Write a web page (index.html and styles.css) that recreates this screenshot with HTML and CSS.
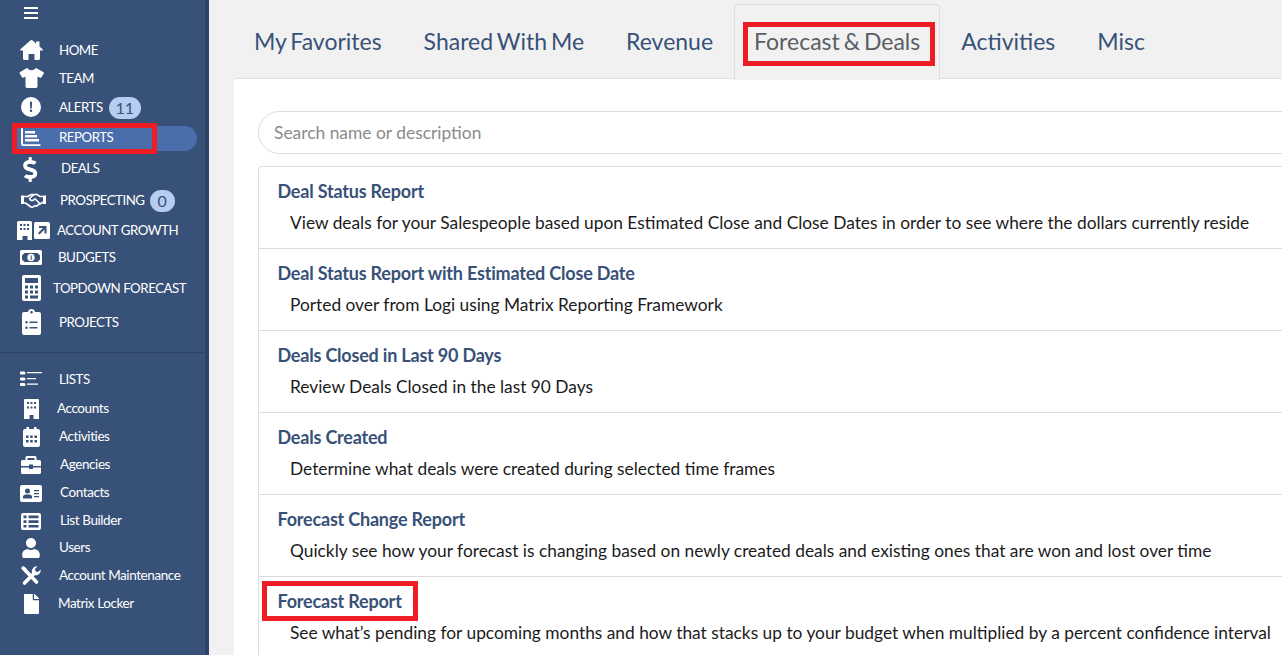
FILE: index.html
```html
<!DOCTYPE html>
<html lang="en">
<head>
<meta charset="utf-8">
<title>Reports</title>
<link rel="stylesheet" href="styles.css">
</head>
<body>
<div class="app">
  <aside class="sidebar">
    <div class="burger"><span></span><span></span><span></span></div>
    <nav class="nav">
      <a class="item h28"><span class="ico"><svg width="23" height="20" viewBox="0 0 23 20"><path d="M10.300.5a1.800 1.800 0 0 1 2.400 0l3.300 2.900V1.500h3.500v5l3.100 2.700c.6.500.2 1.400-.5 1.400H20V18.500a1.500 1.500 0 0 1-1.500 1.500H14.500v-6h-6v6H4.500A1.500 1.500 0 0 1 3 18.500V10.600H.900c-.7 0-1.100-.9-.5-1.400z"/></svg></span><span class="lbl">HOME</span></a>
      <a class="item h28"><span class="ico"><svg width="25" height="20" viewBox="0 0 25 20"><path d="M7.500.300c.4-.3 1-.3 1.200.100 1 2.300 6.600 2.300 7.600 0 .2-.4.800-.4 1.200-.100l6.800 3.600c.6.300.8 1 .5 1.500l-2.300 3.800c-.3.500-.9.700-1.400.5L18.500 8.600v10a1.400 1.400 0 0 1-1.400 1.400H7.900a1.400 1.400 0 0 1-1.400-1.400v-10L4.400 9.700c-.5.200-1.100 0-1.400-.5L.7 5.400C.4 4.900.6 4.200 1.200 3.900z"/></svg></span><span class="lbl">TEAM</span></a>
      <a class="item h30"><span class="ico"><svg width="20" height="20" viewBox="0 0 20 20"><path fill-rule="evenodd" d="M10 0a10 10 0 1 1 0 20 10 10 0 0 1 0-20zM8.900 4.800l.3 6.600h1.600l.3-6.600zM10 12.500a1.300 1.300 0 1 0 0 2.600 1.300 1.300 0 0 0 0-2.600z"/></svg></span><span class="lbl">ALERTS</span><span class="badge b-alerts">11</span></a>
      <a class="item h30 active"><span class="ico"><svg width="20" height="18" viewBox="0 0 20 18"><path d="M0 1a1 1 0 0 1 2 0v14.500a.8.8 0 0 0 .8.800H19a.9.9 0 0 1 0 1.700H2.500A2.500 2.500 0 0 1 0 15.500zM4 3h10v2.500H4zM4 7h12v2.500H4zM4 11h14v2.500H4z"/></svg></span><span class="lbl">REPORTS</span></a>
      <a class="item h32"><span class="ico"><svg class="nudge-1" width="16" height="25" viewBox="0 0 320 512"><path d="M209.200 233.400l-108-31.600C88.700 198.200 80 186.500 80 173.500c0-16.300 13.200-29.500 29.500-29.500h66.300c12.200 0 24.200 3.700 34.200 10.500 6.100 4.100 14.300 3.100 19.500-2l34.800-34c7.100-6.900 6.100-18.400-1.800-24.500C238 74.800 207.400 64.100 176 64V16c0-8.800-7.200-16-16-16h-32c-8.800 0-16 7.200-16 16v48h-2.500C45.800 64-5.400 118.700.5 183.600c4.200 46.100 39.400 83.600 83.800 96.600l102.500 30c12.500 3.700 21.200 15.300 21.200 28.300 0 16.300-13.200 29.500-29.500 29.500h-66.300C100 368 88 364.300 78 357.500c-6.100-4.100-14.300-3.100-19.500 2l-34.800 34c-7.100 6.900-6.100 18.400 1.800 24.500 24.500 19.200 55.100 29.900 86.500 30v48c0 8.800 7.200 16 16 16h32c8.800 0 16-7.200 16-16v-48.200c46.600-.9 90.300-28.600 105.700-72.700 21.500-61.600-14.600-124.800-72.500-141.700z"/></svg></span><span class="lbl o2">DEALS</span></a>
      <a class="item h32"><span class="ico"><svg class="nudge-2" width="25" height="15" viewBox="0 0 25 15"><path d="M0 2.500h3V11H0zM22 2.500h3V11h-3z"/><path class="line" d="M3 3.500h3.500L10.500 1.500h2.500M8.500 5.500l4-3.500 3-.8 3.500 2.300h3M3 10h1.500l5.500 4 1.500.3 2-1.500 2.500.3 1-1.500 1.500-.3 3-1.800h1.500M9 6.500c1 1.500 2.500 1.200 3.700.3l1.300-1 5 5"/></svg></span><span class="lbl o1">PROSPECTING</span><span class="badge b-prosp">0</span></a>
      <a class="item h28"><span class="ico wide"><svg class="nudge-2" width="33" height="19" viewBox="0 0 33 19"><path fill-rule="evenodd" d="M1.500 0h12A1.500 1.500 0 0 1 15 1.500V19h-4.500v-4h-5v4H0V1.500A1.500 1.500 0 0 1 1.500 0zM3 3v2h2V3zm3.500 0v2h2V3zM10 3v2h2V3zM3 7v2h2V7zm3.500 0v2h2V7zM10 7v2h2V7z"/><path fill-rule="evenodd" d="M18.500 1h13A1.500 1.500 0 0 1 33 2.500v14a1.500 1.500 0 0 1-1.500 1.500h-13a1.500 1.500 0 0 1-1.500-1.500v-14A1.500 1.500 0 0 1 18.500 1zM22 5v2h4l-5 5 1.500 1.500 5-5v4h2V5z"/></svg></span><span class="lbl om2">ACCOUNT GROWTH</span></a>
      <a class="item h26"><span class="ico"><svg width="22" height="15" viewBox="0 0 22 15"><path fill-rule="evenodd" d="M1.500 0h19A1.500 1.500 0 0 1 22 1.500v12a1.500 1.500 0 0 1-1.500 1.500h-19A1.500 1.500 0 0 1 0 13.500v-12A1.500 1.500 0 0 1 1.500 0zM4.500 3 2 5.500v4L4.500 12h13L20 9.500v-4L17.500 3zM11 3.800a3.700 3.700 0 1 1 0 7.400 3.700 3.700 0 0 1 0-7.400zM10.300 5.500v.8h.5v2.400h-.6v.8h2v-.8h-.5V5.500z"/></svg></span><span class="lbl om1">BUDGETS</span></a>
      <a class="item h36"><span class="ico"><svg width="19" height="26" viewBox="0 0 19 26"><path fill-rule="evenodd" d="M2 0h15a2 2 0 0 1 2 2v22a2 2 0 0 1-2 2H2a2 2 0 0 1-2-2V2a2 2 0 0 1 2-2zM3 3v5h13V3zM3 10.500v3h3v-3zm5 0v3h3v-3zm5 0v3h3v-3zM3 15.500v3h3v-3zm5 0v3h3v-3zm5 0v3h3v-3zM3 20.500v3h3v-3zm5 0v3h8v-3z"/></svg></span><span class="lbl om6">TOPDOWN FORECAST</span></a>
      <a class="item h32"><span class="ico"><svg width="19" height="26" viewBox="0 0 19 26"><path fill-rule="evenodd" d="M9.500 0A3.500 3.500 0 0 1 13 3h4a2 2 0 0 1 2 2v19a2 2 0 0 1-2 2H2a2 2 0 0 1-2-2V5a2 2 0 0 1 2-2h4a3.500 3.500 0 0 1 3.500-3zm0 2a1.300 1.300 0 1 0 0 2.600 1.300 1.300 0 0 0 0-2.600zM4.500 12a1.200 1.200 0 1 0 0 2.400 1.200 1.200 0 0 0 0-2.400zm3 .5v1.400h8v-1.400zm-3 5a1.200 1.200 0 1 0 0 2.400 1.200 1.200 0 0 0 0-2.400zm3 .5v1.400h8V18z"/></svg></span><span class="lbl">PROJECTS</span></a>
    </nav>
    <hr class="divider">
    <nav class="nav sub">
      <a class="item h28"><span class="ico"><svg width="22" height="14" viewBox="0 0 22 14"><path d="M0 .5a1 1 0 0 1 1-1h3a1 1 0 0 1 0 3H1a1 1 0 0 1-1-1zM7 0h15v1.300H7zM0 6.500a1 1 0 0 1 1-1h3a1 1 0 0 1 0 3H1a1 1 0 0 1-1-1zM7 6h9v1.300H7zM0 12a1 1 0 0 1 1-1h3a1 1 0 0 1 0 3H1a1 1 0 0 1-1-1zM7 11.500h11v1.300H7z"/></svg></span><span class="lbl big">LISTS</span></a>
      <a class="item h28 gap2"><span class="ico"><svg width="15" height="20" viewBox="0 0 15 20"><path fill-rule="evenodd" d="M1 0h13a1 1 0 0 1 1 1v19H9.500v-4h-4v4H0V1a1 1 0 0 1 1-1zM3 3v2h2V3zm3.500 0v2h2V3zM10 3v2h2V3zM3 7.500v2h2v-2zm3.500 0v2h2v-2zm3.500 0v2h2v-2z"/></svg></span><span class="lbl om2">Accounts</span></a>
      <a class="item h28"><span class="ico"><svg width="17" height="20" viewBox="0 0 17 20"><path fill-rule="evenodd" d="M3.500 0h2.500v2h5V0h2.500v2H15a2 2 0 0 1 2 2v14a2 2 0 0 1-2 2H2a2 2 0 0 1-2-2V4a2 2 0 0 1 2-2h1.500zM3 8.500v2.500h2.500V8.500zm4.200 0v2.500h2.500V8.500zm4.300 0v2.500H14V8.500zM3 13v2.500h2.500V13zm4.200 0v2.500h2.500V13zm4.300 0v2.500H14V13z"/></svg></span><span class="lbl">Activities</span></a>
      <a class="item h28"><span class="ico"><svg width="20" height="18" viewBox="0 0 20 18"><path fill-rule="evenodd" d="M6 0h8a1.500 1.500 0 0 1 1.500 1.500V4h3A1.500 1.500 0 0 1 20 5.500V10h-8V8.500H8V10H0V5.500A1.500 1.500 0 0 1 1.500 4h3V1.500A1.500 1.500 0 0 1 6 0zm.500 2v2h7V2zM0 11.500h8V13h4v-1.500h8v5A1.500 1.500 0 0 1 18.500 18h-17A1.500 1.500 0 0 1 0 16.500z"/></svg></span><span class="lbl o1">Agencies</span></a>
      <a class="item h28"><span class="ico"><svg width="22" height="17" viewBox="0 0 22 17"><path fill-rule="evenodd" d="M2 0h18a2 2 0 0 1 2 2v13a2 2 0 0 1-2 2H2a2 2 0 0 1-2-2V2a2 2 0 0 1 2-2zm5.500 3.500a2.500 2.500 0 1 0 0 5 2.500 2.500 0 0 0 0-5zM3 13.500h9v-1.800C12 10.500 10.500 9.500 9.500 9.500h-4C4.500 9.500 3 10.500 3 11.700zM14 5v1.300h5V5zm0 3v1.300h5V8zm0 3v1.300h5V11z"/></svg></span><span class="lbl o1">Contacts</span></a>
      <a class="item h28"><span class="ico"><svg width="20" height="17" viewBox="0 0 20 17"><path fill-rule="evenodd" d="M2 0h16a2 2 0 0 1 2 2v13a2 2 0 0 1-2 2H2a2 2 0 0 1-2-2V2a2 2 0 0 1 2-2zm.500 2.500v2.800h3V2.500zm5 0v2.800h10V2.500zm-5 4.700V10h3V7.200zm5 0V10h10V7.200zm-5 4.700v2.700h3v-2.700zm5 0v2.700h10v-2.700z"/></svg></span><span class="lbl o1">List Builder</span></a>
      <a class="item h26 after1"><span class="ico"><svg width="18" height="20" viewBox="0 0 448 512"><path d="M224 256c70.700 0 128-57.300 128-128S294.700 0 224 0 96 57.300 96 128s57.300 128 128 128zm89.600 32h-16.700c-22.200 10.200-46.900 16-72.900 16s-50.600-5.800-72.900-16h-16.700C60.200 288 0 348.200 0 422.400V464c0 26.500 21.500 48 48 48h352c26.500 0 48-21.500 48-48v-41.600c0-74.200-60.200-134.400-134.400-134.400z"/></svg></span><span class="lbl">Users</span></a>
      <a class="item h28"><span class="ico"><svg width="20" height="20" viewBox="0 0 20 20"><path class="thick" d="M2.500 2.500 15.500 16"/><path class="thick" d="M3.500 17 13 7.500"/><path d="M0 2 2 0l3.500 2.500V5l-1 1zM11 7c-.8-3.500 1.500-7 5.500-6.800L14 3l.6 2.400 2.400.6 2.700-2.600C20 7.500 16.500 10 13 9z"/></svg></span><span class="lbl">Account Maintenance</span></a>
      <a class="item h28"><span class="ico"><svg width="15" height="20" viewBox="0 0 384 512"><path d="M224 136V0H24C10.700 0 0 10.700 0 24v464c0 13.300 10.700 24 24 24h336c13.300 0 24-10.700 24-24V160H248c-13.200 0-24-10.800-24-24zm160-14.100v6.100H256V0h6.100c6.400 0 12.500 2.500 17 7l97.900 98c4.500 4.500 7 10.600 7 16.900z"/></svg></span><span class="lbl om1">Matrix Locker</span></a>
    </nav>
  </aside>

  <main class="main">
    <div class="tabs">
      <a class="tab">My Favorites</a>
      <a class="tab">Shared With Me</a>
      <a class="tab">Revenue</a>
      <a class="tab current">Forecast &amp; Deals</a>
      <a class="tab">Activities</a>
      <a class="tab">Misc</a>
    </div>
    <section class="panel">
      <input class="search" type="text" placeholder="Search name or description">
      <ul class="reports">
        <li class="report"><h3>Deal Status Report</h3><p>View deals for your Salespeople based upon Estimated Close and Close Dates in order to see where the dollars currently reside</p></li>
        <li class="report"><h3>Deal Status Report with Estimated Close Date</h3><p>Ported over from Logi using Matrix Reporting Framework</p></li>
        <li class="report"><h3>Deals Closed in Last 90 Days</h3><p>Review Deals Closed in the last 90 Days</p></li>
        <li class="report"><h3>Deals Created</h3><p>Determine what deals were created during selected time frames</p></li>
        <li class="report"><h3>Forecast Change Report</h3><p>Quickly see how your forecast is changing based on newly created deals and existing ones that are won and lost over time</p></li>
        <li class="report"><h3>Forecast Report</h3><p>See what’s pending for upcoming months and how that stacks up to your budget when multiplied by a percent confidence interval</p></li>
      </ul>
    </section>
  </main>
</div>
<div class="mark mark-reports"></div>
<div class="mark mark-tab"></div>
<div class="mark mark-report"></div>
</body>
</html>
```
FILE: styles.css
```css
* { box-sizing: border-box; }
html, body { margin: 0; height: 100%; overflow: hidden; }
body { font-family: Lato, "Open Sans", sans-serif; background: #f1f1f1; position: relative; }
.app { display: flex; height: 655px; width: 1282px; overflow: hidden; }

.sidebar { flex: 0 0 209px; background: #385178; border-right: 4px solid #2d4366; color: #fff; }
.burger { display: flex; flex-direction: column; gap: 3px; width: 14px; height: 36px; margin-left: 24px; padding-top: 7px; }
.burger span { display: block; height: 2px; background: #fff; }
.nav { display: flex; flex-direction: column; }
.item { display: flex; align-items: center; position: relative; color: #fff; }
.h26 { height: 26px; } .h28 { height: 28px; } .h30 { height: 30px; } .h32 { height: 32px; } .h36 { height: 36px; }
.gap2 { margin-top: 2px; }
.after1 { margin-bottom: 1px; }
.active::before { content: ""; position: absolute; left: 14px; right: 8px; top: 4px; height: 25px; background: #4a6dab; border-radius: 0 13px 13px 0; }
.ico { position: relative; flex: 0 0 62px; margin-right: -3px; display: flex; justify-content: center; align-items: center; }
.ico svg { fill: #fff; display: block; overflow: visible; flex: none; }
.ico .line { fill: none; stroke: #fff; stroke-width: 1.6; stroke-linecap: round; stroke-linejoin: round; }
.ico .thick { fill: none; stroke: #fff; stroke-width: 3.6; stroke-linecap: round; }
.nudge-1 { transform: translateY(1px); }
.nudge-2 { transform: translateX(2px); }
.lbl { position: relative; font-size: 13.33px; letter-spacing: -0.5px; white-space: nowrap; }
.sub .lbl { font-size: 13.5px; letter-spacing: -0.42px; top: -1px; }
.sub .lbl.big { font-size: 13.33px; letter-spacing: -0.4px; top: 0; }
.o1 { margin-left: 1px; } .o2 { margin-left: 2px; }
.om1 { margin-left: -1px; } .om2 { margin-left: -2px; } .om6 { margin-left: -6px; }
.badge { display: flex; justify-content: center; align-items: center; height: 22px; border-radius: 11px; background: #b5cdf0; color: #385178; font-size: 16px; margin-top: 1px; }
.b-alerts { width: 32px; margin-left: 6px; }
.b-prosp { width: 25px; margin-left: 5px; }
.divider { height: 1px; border: 0; margin: 14px 0 12px; background: #2d4366; }

.main { flex: 0 0 1073px; margin-left: 25px; }
.tabs { display: flex; height: 79px; padding: 4px 0 0; border-bottom: 1px solid #e0e0e0; }
.tab { display: flex; align-items: center; height: 75px; padding: 0 20px 2px; font-size: 23px; word-spacing: -2px; color: #385178; border: 1px solid transparent; border-bottom: 0; white-space: nowrap; }
.tabs .tab:first-child { margin-left: -1px; }
.current { color: #5a5f66; background: #f1f1f1; border-color: #dedede; border-radius: 4px 4px 0 0; height: 76px; padding: 0 19px 3px; }
.panel { height: 600px; background: #fff; padding: 32px 0 0 24px; border-radius: 3px 0 0 0; }
.search { display: block; width: 1100px; height: 43px; padding: 0 15px; border: 1px solid #dcdcdc; border-radius: 22px; font: 17.4px Lato, sans-serif; color: #333; outline: 0; }
.search::placeholder { color: #8b8b8b; opacity: 1; }
.reports { list-style: none; margin: 12px 0 0; padding: 0; width: 1100px; border: 1px solid #dcdcdc; border-radius: 4px 0 0 0; }
.report { height: 82px; padding: 12px 19px 0 18.5px; border-bottom: 1px solid #dcdcdc; }
.report h3 { margin: 0; font-size: 18px; line-height: 24px; font-weight: 700; letter-spacing: -0.2px; color: #385178; }
.report p { margin: 8px 0 0 12.5px; font-size: 17.33px; line-height: 24px; color: #1b1b1b; white-space: nowrap; }

.mark { position: absolute; border: 5px solid #ee1c25; }
.mark-reports { left: 12px; top: 123px; width: 145px; height: 31px; }
.mark-tab { left: 743px; top: 22px; width: 192px; height: 44px; }
.mark-report { left: 262px; top: 581px; width: 156px; height: 40px; }
```
